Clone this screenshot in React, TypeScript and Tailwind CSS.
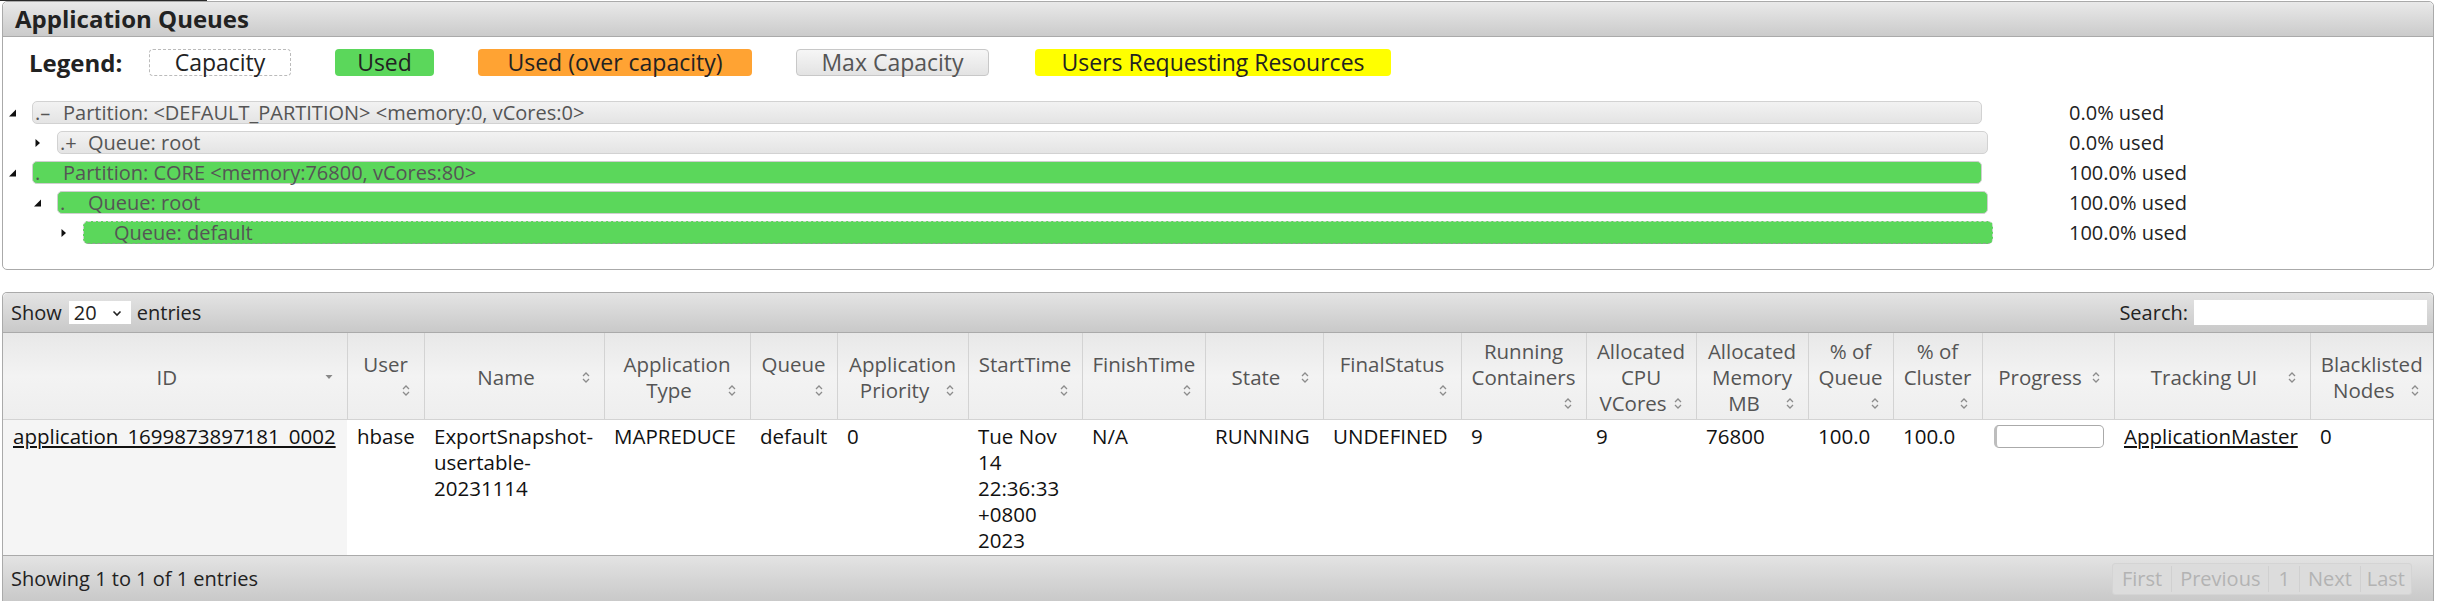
import React from "react";

type Col = { w: string; lines: string[]; inline: boolean; sort?: "desc" };

const cols: Col[] = [
  { w: "w-[344px]", lines: ["ID"], inline: true, sort: "desc" },
  { w: "w-[77px]", lines: ["User"], inline: false },
  { w: "w-[180px]", lines: ["Name"], inline: true },
  { w: "w-[146px]", lines: ["Application", "Type"], inline: true },
  { w: "w-[87px]", lines: ["Queue"], inline: false },
  { w: "w-[131px]", lines: ["Application", "Priority"], inline: true },
  { w: "w-[114px]", lines: ["StartTime"], inline: false },
  { w: "w-[123px]", lines: ["FinishTime"], inline: false },
  { w: "w-[118px]", lines: ["State"], inline: true },
  { w: "w-[138px]", lines: ["FinalStatus"], inline: false },
  { w: "w-[125px]", lines: ["Running", "Containers"], inline: false },
  { w: "w-[110px]", lines: ["Allocated", "CPU", "VCores"], inline: true },
  { w: "w-[112px]", lines: ["Allocated", "Memory", "MB"], inline: true },
  { w: "w-[85px]", lines: ["% of", "Queue"], inline: false },
  { w: "w-[89px]", lines: ["% of", "Cluster"], inline: false },
  { w: "w-[132px]", lines: ["Progress"], inline: true },
  { w: "w-[196px]", lines: ["Tracking UI"], inline: true },
  { w: "w-[123px]", lines: ["Blacklisted", "Nodes"], inline: true },
];

const queues = [
  { level: 0, open: true, used: false, prefix: ".\u2013", label: "Partition: <DEFAULT_PARTITION> <memory:0, vCores:0>", pct: "0.0% used" },
  { level: 1, open: false, used: false, prefix: ".+", label: "Queue: root", pct: "0.0% used" },
  { level: 0, open: true, used: true, prefix: ".", label: "Partition: CORE <memory:76800, vCores:80>", pct: "100.0% used" },
  { level: 1, open: true, used: true, prefix: ".", label: "Queue: root", pct: "100.0% used" },
  { level: 2, open: false, used: true, prefix: "", label: "Queue: default", pct: "100.0% used" },
];

const indent = ["pl-[5px]", "pl-[30px]", "pl-[56px]"];
const barWidth = ["w-[1950px]", "w-[1931px]", "w-[1910px]"];

function SortIcon() {
  return (
    <svg width="16" height="16" viewBox="0 0 16 16" className="shrink-0">
      <path d="M5 7 L8 4 L11 7" fill="none" stroke="#8c8c8c" strokeWidth="1.3" />
      <path d="M5 10 L8 13 L11 10" fill="none" stroke="#8c8c8c" strokeWidth="1.3" />
    </svg>
  );
}

function DescIcon() {
  return (
    <svg width="16" height="16" viewBox="0 0 16 16" className="shrink-0">
      <path d="M4.5 6 L11.5 6 L8 10 Z" fill="#888" />
    </svg>
  );
}

function TreeToggle({ open }: { open: boolean }) {
  return (
    <svg width="9" height="10" viewBox="0 0 9 10">
      {open ? <path d="M8 1.5 L8 8.5 L1 8.5 Z" fill="#111" /> : <path d="M2.5 1 L7 5 L2.5 9 Z" fill="#111" />}
    </svg>
  );
}

function HeaderCell({ col }: { col: Col }) {
  const icon = col.sort === "desc" ? <DescIcon /> : <SortIcon />;
  const last = col.lines.length - 1;
  return (
    <th className="border-r border-b border-[#d3d3d3] px-[10px] pt-[5px] pb-[3px] align-middle font-normal last:border-r-0">
      {col.lines.map((l, i) =>
        col.inline && i === last ? (
          <div key={i} className="flex items-center">
            <span className="flex-1 text-center whitespace-nowrap">{l}</span>
            {icon}
          </div>
        ) : (
          <div key={i} className="text-center whitespace-nowrap">
            {l}
          </div>
        )
      )}
      {!col.inline && <div className="flex h-[26px] items-center justify-end">{icon}</div>}
    </th>
  );
}

function Lines({ lines }: { lines: string[] }) {
  return (
    <>
      {lines.map((l) => (
        <div key={l} className="whitespace-nowrap">
          {l}
        </div>
      ))}
    </>
  );
}

export default function App() {
  const cell = "px-[10px] pt-[3px] pb-[2px] align-top whitespace-nowrap";

  return (
    <div className="min-h-screen bg-white font-['Open_Sans',sans-serif] text-[#222]">
      <div className="h-px w-[207px] bg-[#2a2a2a]" />

      {/* Application Queues */}
      <section className="ml-[2px] w-[2432px] rounded-[5px] border border-[#aaa] bg-white">
        <div className="flex h-[35px] items-center rounded-t-[5px] border-b border-[#aaa] bg-linear-to-b from-[#e9e9e9] to-[#cbcbcb] pl-[12px] text-[24px] leading-none font-bold text-[#222]">
          Application Queues
        </div>

        <div className="pt-[12px] pb-[25px]">
          <div className="flex h-[27px] items-center pl-[26px] text-[23px]">
            <span className="w-[120px] shrink-0 text-[24px] font-bold">Legend:</span>
            <span className="flex h-[27px] w-[142px] items-center justify-center rounded-[4px] border border-dashed border-[#bbb] bg-white">
              Capacity
            </span>
            <span className="ml-[44px] flex h-[27px] w-[99px] items-center justify-center rounded-[4px] bg-[#5bd75b]">
              Used
            </span>
            <span className="ml-[44px] flex h-[27px] w-[274px] items-center justify-center rounded-[4px] bg-[#ffa333]">
              Used (over capacity)
            </span>
            <span className="ml-[44px] flex h-[27px] w-[193px] items-center justify-center rounded-[4px] border border-[#c8c8c8] bg-linear-to-b from-[#f6f6f6] to-[#e3e3e3] text-[#555]">
              Max Capacity
            </span>
            <span className="ml-[46px] flex h-[27px] w-[356px] items-center justify-center rounded-[4px] bg-[#ffff00]">
              Users Requesting Resources
            </span>
          </div>

          <div className="mt-[25px] flex flex-col gap-[7px] text-[20px]">
            {queues.map((q, i) => (
              <div key={i} className="flex h-[23px] items-center">
                <div className={`flex w-[2066px] shrink-0 items-center ${indent[q.level]}`}>
                  <span className="flex w-[9px] justify-center">
                    <TreeToggle open={q.open} />
                  </span>
                  <div
                    className={`ml-[15px] flex h-[23px] items-center rounded-[5px] border pl-[2px] leading-[21px] text-[#555] ${barWidth[q.level]} ${
                      q.used
                        ? "border-[#cfcfcf] bg-[#5bd75b]"
                        : "border-[#d2d2d2] bg-linear-to-b from-[#f2f2f2] to-[#e4e4e4]"
                    } ${q.level === 2 ? "border-b-[#999] border-dashed" : ""}`}
                  >
                    <span className="w-[28px] shrink-0 whitespace-pre">{q.prefix}</span>
                    <span className="whitespace-nowrap">{q.label}</span>
                  </div>
                </div>
                <span className="whitespace-nowrap text-[#222]">{q.pct}</span>
              </div>
            ))}
          </div>
        </div>
      </section>

      {/* Applications table */}
      <section className="mt-[22px] ml-[2px] w-[2432px] rounded-t-[5px] border border-b-0 border-[#aaa] text-[20.5px] leading-[26px]">
        <div className="flex h-[40px] items-center justify-between rounded-t-[5px] border-b border-[#aaa] bg-linear-to-b from-[#e4e4e4] to-[#c9c9c9] pr-[6px] pl-[8px] text-[20px]">
          <div className="flex items-center">
            <span>Show</span>
            <div className="ml-[7px] flex h-[23px] w-[62px] items-center justify-between bg-white pr-[8px] pl-[5px]">
              <span>20</span>
              <svg width="12" height="12" viewBox="0 0 12 12">
                <path d="M2.5 4.5 L6 8 L9.5 4.5" fill="none" stroke="#222" strokeWidth="1.6" />
              </svg>
            </div>
            <span className="ml-[6px]">entries</span>
          </div>
          <div className="flex items-center">
            <span>Search:</span>
            <div className="ml-[6px] h-[25px] w-[233px] bg-white" />
          </div>
        </div>

        <table className="w-full table-fixed border-collapse">
          <colgroup>
            {cols.map((c, i) => (
              <col key={i} className={c.w} />
            ))}
          </colgroup>
          <thead>
            <tr className="bg-linear-to-b from-[#e8e8e8] via-[#f3f3f3] to-[#eeeeee] text-[#555]">
              {cols.map((c, i) => (
                <HeaderCell key={i} col={c} />
              ))}
            </tr>
          </thead>
          <tbody>
            <tr className="bg-white text-[#111]">
              <td className={`${cell} bg-[#f5f5f5]`}>
                <a href="#" className="underline underline-offset-2">
                  application_1699873897181_0002
                </a>
              </td>
              <td className={cell}>hbase</td>
              <td className={cell}>
                <Lines lines={["ExportSnapshot-", "usertable-", "20231114"]} />
              </td>
              <td className={cell}>MAPREDUCE</td>
              <td className={cell}>default</td>
              <td className={cell}>0</td>
              <td className={cell}>
                <Lines lines={["Tue Nov", "14", "22:36:33", "+0800", "2023"]} />
              </td>
              <td className={cell}>N/A</td>
              <td className={cell}>RUNNING</td>
              <td className={cell}>UNDEFINED</td>
              <td className={cell}>9</td>
              <td className={cell}>9</td>
              <td className={cell}>76800</td>
              <td className={cell}>100.0</td>
              <td className={cell}>100.0</td>
              <td className={cell}>
                <div className="mt-[2px] ml-[2px] h-[23px] w-[110px] rounded-[5px] border border-[#aaa] border-l-[3px] border-l-[#bdbdbd] bg-white" />
              </td>
              <td className={cell}>
                <a href="#" className="underline underline-offset-2">
                  ApplicationMaster
                </a>
              </td>
              <td className={cell}>0</td>
            </tr>
          </tbody>
        </table>

        <div className="flex h-[46px] items-center justify-between border-t border-[#aaa] bg-linear-to-b from-[#e3e3e3] to-[#c9c9c9] pr-[21px] pl-[8px] text-[20px]">
          <span>Showing 1 to 1 of 1 entries</span>
          <div className="flex h-[32px] items-center rounded-[3px] border border-[#d4d4d4] bg-[#dcdcdc] text-[#b3b3b3]">
            <span className="px-[9px]">First</span>
            <span className="border-l border-[#d0d0d0] px-[8px]">Previous</span>
            <span className="border-l border-[#d0d0d0] px-[9px]">1</span>
            <span className="border-l border-[#d0d0d0] px-[8px]">Next</span>
            <span className="border-l border-[#d0d0d0] px-[6px]">Last</span>
          </div>
        </div>
      </section>
    </div>
  );
}
